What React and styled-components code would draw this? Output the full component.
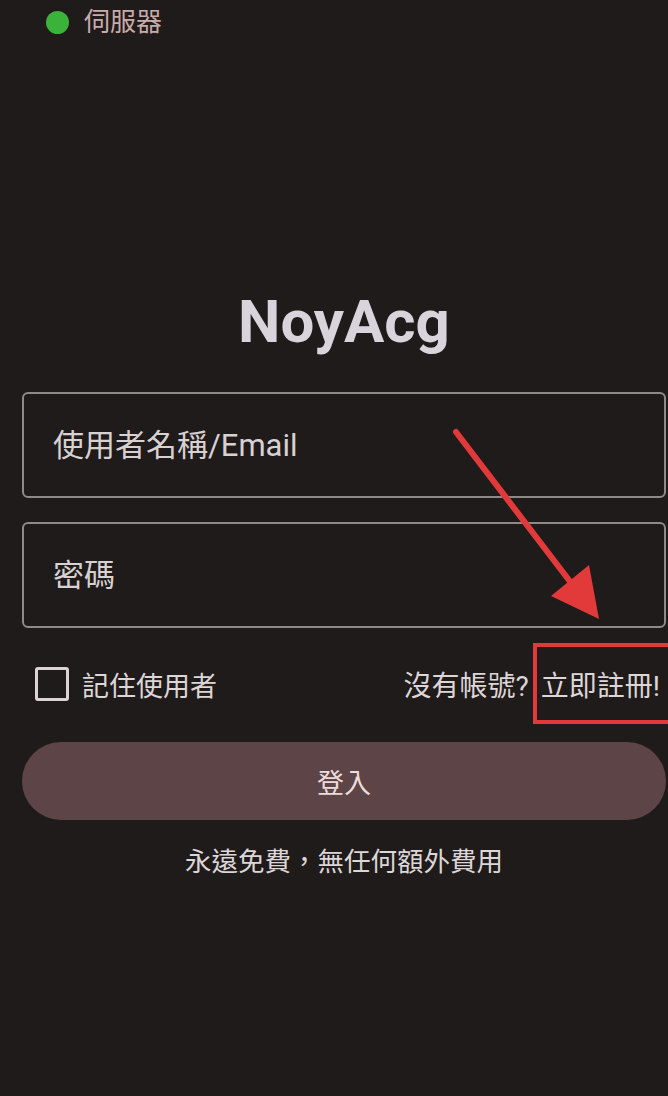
import styled, { createGlobalStyle } from "styled-components";

const GlobalStyle = createGlobalStyle`
  body {
    margin: 0;
    background-color: #201b1b;
    font-family: Roboto, "Noto Sans CJK TC", sans-serif;
  }
`;

const Screen = styled.div`
  position: relative;
  width: 668px;
  height: 1096px;
  overflow: hidden;
  background-color: #201b1b;
  display: flex;
  flex-direction: column;
`;

const StatusRow = styled.div`
  display: flex;
  align-items: center;
  gap: 15px;
  padding: 10px 0 0 46px;
  height: 24px;
`;

const StatusDot = styled.span`
  width: 23px;
  height: 23px;
  border-radius: 50%;
  background-color: #3bb33b;
`;

const StatusText = styled.span`
  font-size: 26px;
  line-height: 24px;
  color: #c9abaa;
`;

const Main = styled.div`
  display: flex;
  flex-direction: column;
  padding: 0 2px 0 22px;
`;

const Title = styled.h1`
  margin: 253px 0 0;
  font-family: Roboto, sans-serif;
  font-weight: 700;
  font-size: 60px;
  line-height: 70px;
  text-align: center;
  color: #d9d3db;
`;

const Field = styled.input`
  box-sizing: border-box;
  height: 106px;
  margin-top: ${(p) => p.$gap}px;
  padding: 0 29px;
  background: transparent;
  border: 2px solid #8f8a8a;
  border-radius: 6px;
  font-family: inherit;
  font-size: 31px;
  color: #ddd6d6;
  outline: none;

  &::placeholder {
    color: #d8d1d1;
  }
`;

const OptionsRow = styled.div`
  display: flex;
  align-items: center;
  justify-content: space-between;
  height: 40px;
  margin-top: 36px;
  padding: 0 6px 0 13px;
`;

const Remember = styled.label`
  display: flex;
  align-items: center;
  gap: 13px;
  font-size: 27px;
  color: #ddd6d6;
`;

const Box = styled.span`
  box-sizing: border-box;
  width: 34px;
  height: 34px;
  border: 3.5px solid #ddd3d3;
  border-radius: 3px;
`;

const SignupText = styled.div`
  display: flex;
  gap: 12px;
  font-size: 28px;
  color: #ddd6d6;
`;

const LoginButton = styled.button`
  height: 78px;
  margin-top: 38px;
  border: none;
  border-radius: 39px;
  background-color: #5d4446;
  font-family: inherit;
  font-size: 27px;
  color: #eddcdc;
`;

const Footnote = styled.p`
  margin: 24px 0 0;
  font-size: 26.5px;
  line-height: 36px;
  text-align: center;
  color: #ddd6d6;
`;

const Annotation = styled.svg`
  position: absolute;
  left: 0;
  top: 0;
  pointer-events: none;
`;

const App = () => {
  return (
    <Screen>
      <GlobalStyle />
      <StatusRow>
        <StatusDot />
        <StatusText>伺服器</StatusText>
      </StatusRow>
      <Main>
        <Title>NoyAcg</Title>
        <Field $gap={35} type="text" placeholder="使用者名稱/Email" />
        <Field $gap={24} type="password" placeholder="密碼" />
        <OptionsRow>
          <Remember>
            <Box />
            記住使用者
          </Remember>
          <SignupText>
            <span>沒有帳號?</span>
            <span>立即註冊!</span>
          </SignupText>
        </OptionsRow>
        <LoginButton>登入</LoginButton>
        <Footnote>永遠免費，無任何額外費用</Footnote>
      </Main>
      <Annotation width="668" height="1096" viewBox="0 0 668 1096">
        <line x1="456" y1="432" x2="578" y2="592" stroke="#e23a3a" strokeWidth="6" strokeLinecap="round" />
        <polygon points="599,619 551,596 589,565" fill="#e23a3a" />
        <rect x="535" y="645" width="150" height="77" fill="none" stroke="#e23a3a" strokeWidth="4" />
      </Annotation>
    </Screen>
  );
};

export default App;
